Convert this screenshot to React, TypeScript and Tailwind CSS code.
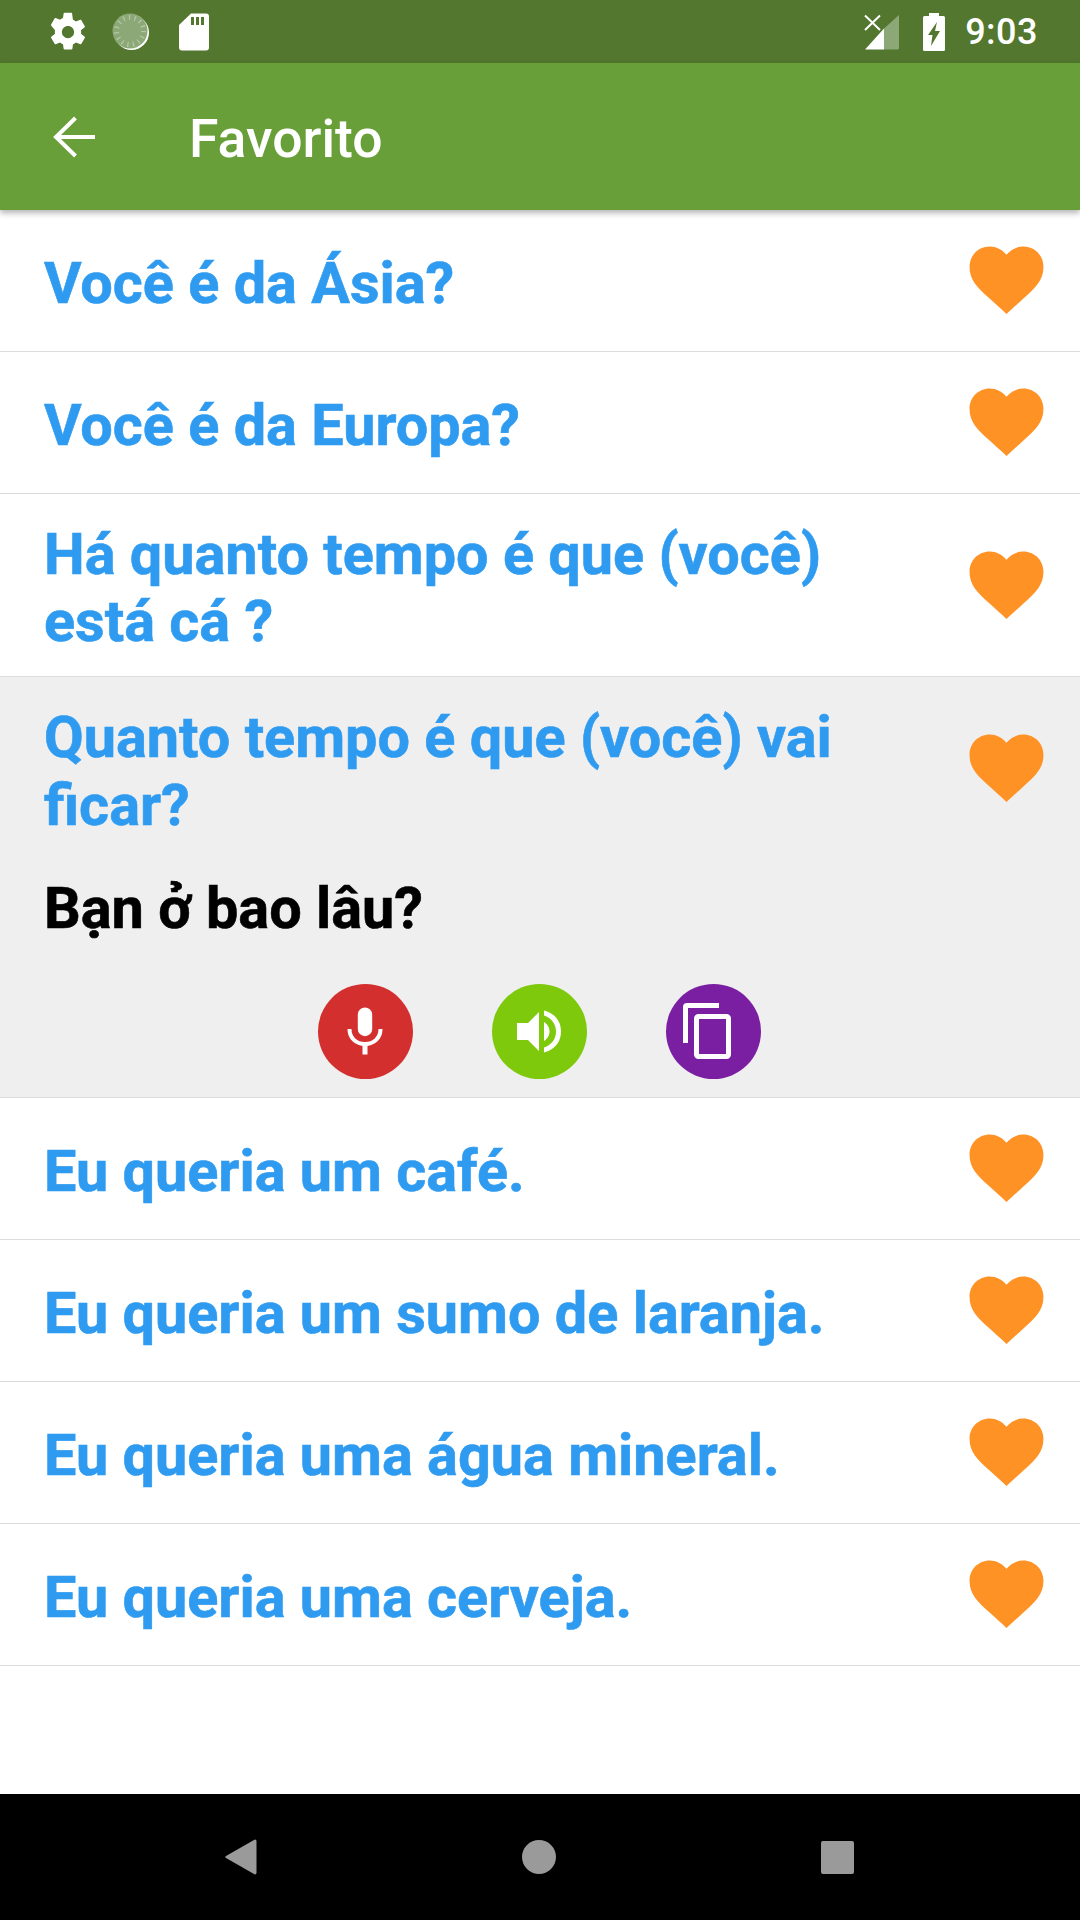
import React from "react";

const Heart = ({ className = "" }: { className?: string }) => (
  <svg width="75" height="69" viewBox="0 0 76 70" className={"shrink-0 " + className}>
    <path d="M38 69 C33 64 27 59 20 52.500 C9 42.500 0.500 35 0.500 21 C0.500 9.500 9.500 0.500 21 0.500 C27.500 0.500 33.500 3.500 38 9 C42.500 3.500 48.500 0.500 55 0.500 C66.500 0.500 75.500 9.500 75.500 21 C75.500 35 67 42.500 56 52.500 C49 59 43 64 38 69 Z" fill="#ff9224" />
  </svg>
);

const Row = ({ text }: { text: React.ReactNode }) => (
  <div className="flex items-center justify-between h-[142px] pl-[44px] pr-[36px] border-b border-[#dcdcdc]">
    <div className="text-[57.6px] leading-[67.5px] font-bold text-[#2f9bf0] [-webkit-text-stroke:0.6px_currentColor] mt-[6px]">{text}</div>
    <Heart />
  </div>
);

export default function App() {
  return (
    <div className="w-[1080px] h-[1920px] flex flex-col bg-white overflow-hidden font-['Roboto',sans-serif]">
      {/* Status bar */}
      <div className="h-[63px] bg-[#53772e] flex items-center pl-[47px] pr-[42px] shrink-0">
        <svg width="42" height="42" viewBox="0 0 24 24" fill="#fff">
          <path d="M19.4 13c.04-.32.1-.65.1-1s-.06-.68-.1-1l2.100-1.650c.2-.15.25-.42.12-.64l-2-3.460c-.12-.22-.39-.3-.61-.22l-2.490 1c-.52-.4-1.080-.73-1.690-.98l-.38-2.650C14.460 1.180 14.250 1 14 1h-4c-.25 0-.46.18-.49.42l-.38 2.650c-.61.25-1.170.59-1.690.98l-2.490-1c-.23-.09-.49 0-.61.22l-2 3.460c-.13.22-.07.49.12.64L4.570 11c-.04.32-.07.66-.07 1s.03.68.07 1l-2.110 1.650c-.19.15-.24.42-.12.64l2 3.460c.12.22.39.3.61.22l2.490-1c.52.4 1.080.73 1.690.98l.38 2.650c.03.24.24.42.49.42h4c.25 0 .46-.18.49-.42l.38-2.650c.61-.25 1.170-.59 1.690-.98l2.490 1c.23.09.49 0 .61-.22l2-3.460c.12-.22.07-.49-.12-.64L19.400 13zM12 15.500c-1.930 0-3.500-1.570-3.500-3.500s1.570-3.500 3.500-3.500 3.500 1.570 3.500 3.500-1.570 3.500-3.500 3.500z" />
        </svg>
        <svg width="38" height="38" viewBox="0 0 38 38" className="ml-[23px]">
          <circle cx="19.500" cy="19.500" r="17.500" fill="#fff" />
          <circle cx="18" cy="18" r="17.500" fill="#8ca876" />
          <circle cx="18" cy="18" r="13.500" fill="none" stroke="#b8c9a8" strokeWidth="5" strokeDasharray="1.200 4.450" />
        </svg>
        <svg width="30" height="38" viewBox="0 0 30 38" className="ml-[29px]">
          <path fillRule="evenodd" fill="#fff" d="M12 0.500 H27 a3 3 0 0 1 3 3 V34.500 a3 3 0 0 1-3 3 H3 a3 3 0 0 1-3-3 V12 Z M12 4 v8 h3 v-8 Z M17 4 v8 h3 v-8 Z M22 4 v8 h3 v-8 Z" />
        </svg>
        <div className="flex-1" />
        <svg width="36" height="36" viewBox="0 0 36 36" className="mt-[1px]">
          <path d="M35 1 V34 a1.500 1.500 0 0 1-1.500 1.500 H20 V14.500 Z" fill="#8ca876" />
          <path d="M20 14.500 V35.500 H1 Z" fill="#fff" />
          <path d="M1 1.500 L16 16 M16 1.500 L1 16" stroke="#fff" strokeWidth="2" fill="none" />
        </svg>
        <svg width="22" height="38" viewBox="0 0 22 38" className="ml-[23px]">
          <path fill="#fff" fillRule="evenodd" d="M6 0 H16 V3 H20.500 A1.500 1.500 0 0 1 22 4.500 V36.500 A1.500 1.500 0 0 1 20.500 38 H1.500 A1.500 1.500 0 0 1 0 36.500 V4.500 A1.500 1.500 0 0 1 1.500 3 H6 Z M14 9 L5 22 H9.500 L8 33 L17 18 H12 Z" />
        </svg>
        <span className="ml-[20px] text-[36px] leading-[38px] text-white font-medium tracking-[0.5px]">9:03</span>
      </div>

      {/* Toolbar */}
      <div className="relative z-10 h-[147px] bg-[#689f38] flex items-center shrink-0 shadow-[0_3px_6px_rgba(0,0,0,0.3)] pl-[53px]">
        <svg width="42" height="42" viewBox="0 0 42 42" fill="none" stroke="#fff" strokeWidth="4">
          <path d="M42 21 H3 M22.500 2 L3 21 L22.500 40" />
        </svg>
        <span className="ml-[94px] text-[53.500px] leading-[60px] font-medium text-white mt-[4px]">Favorito</span>
      </div>

      {/* List */}
      <div className="flex-1 flex flex-col">
        <Row text="Você é da Ásia?" />
        <Row text="Você é da Europa?" />
        <div className="flex items-center justify-between h-[183px] pl-[44px] pr-[36px] border-b border-[#dcdcdc]">
          <div className="text-[57.6px] leading-[67.5px] font-bold text-[#2f9bf0] [-webkit-text-stroke:0.6px_currentColor] mt-[6px]">Há quanto tempo é que (você)<br />está cá ?</div>
          <Heart />
        </div>
        <div className="h-[421px] bg-[#efefef] border-b border-[#dcdcdc] flex flex-col">
          <div className="flex items-center justify-between pl-[44px] pr-[36px] pt-[27px]">
            <div className="text-[57.6px] leading-[67.5px] font-bold text-[#2f9bf0] [-webkit-text-stroke:0.6px_currentColor]">Quanto tempo é que (você) vai<br />ficar?</div>
            <Heart className="mb-[6px]" />
          </div>
          <div className="pl-[44px] mt-[36px] text-[57.6px] leading-[67.5px] font-bold text-black [-webkit-text-stroke:0.6px_currentColor]">Bạn ở bao lâu?</div>
          <div className="flex justify-center gap-[79px] mt-[41px] pr-[2px]">
            <div className="w-[95px] h-[95px] rounded-full bg-[#d32f2f] flex items-center justify-center">
              <svg width="48" height="48" viewBox="0 0 48 48" fill="#fff">
                <path d="M24 0.500 a7.200 7.200 0 0 1 7.200 7.200 V22 a7.200 7.200 0 0 1-14.400 0 V7.700 A7.200 7.200 0 0 1 24 0.500 Z" />
                <path d="M8.500 22 C8.500 31 15 37 24 37 C33 37 39.500 31 39.500 22" fill="none" stroke="#fff" strokeWidth="4" />
                <rect x="21.500" y="36" width="5" height="11.500" />
              </svg>
            </div>
            <div className="w-[95px] h-[95px] rounded-full bg-[#7ec90c] flex items-center justify-center">
              <svg width="48" height="48" viewBox="0 0 48 48" fill="#fff">
                <path d="M2 16 H13 L24 5 V44 L13 33 H2 Z" />
                <path d="M29 15 C32 17 34.500 20 34.500 24.500 C34.500 29 32 32 29 34 Z" />
                <path d="M29 3.500 C40 6.500 46 14 46 24.500 C46 35 40 42.500 29 45.500 V40.500 C36.500 38 41 32 41 24.500 C41 17 36.500 11 29 8.500 Z" />
              </svg>
            </div>
            <div className="w-[95px] h-[95px] rounded-full bg-[#7b1fa2] flex items-center justify-center">
              <svg width="48" height="56" viewBox="0 0 48 56" fill="none" stroke="#fff" strokeWidth="5" className="mr-[12px]">
                <path d="M2.500 40 V4 a1.500 1.500 0 0 1 1.500-1.500 H36" />
                <rect x="13.500" y="13.500" width="32" height="40" rx="2" />
              </svg>
            </div>
          </div>
        </div>
        <Row text="Eu queria um café." />
        <Row text="Eu queria um sumo de laranja." />
        <Row text="Eu queria uma água mineral." />
        <Row text="Eu queria uma cerveja." />
      </div>

      {/* Nav bar */}
      <div className="h-[126px] bg-black flex items-center shrink-0 pl-[225px]">
        <svg width="32" height="36" viewBox="0 0 32 36" fill="#9a9a9a">
          <path d="M30 0.500 a1.500 1.500 0 0 1 1.500 1.500 V34 a1.500 1.500 0 0 1-2.500 1 L1 19 a1.200 1.200 0 0 1 0-2 L29 1 Z" />
        </svg>
        <div className="w-[34px] h-[34px] rounded-full bg-[#9a9a9a] ml-[265px]" />
        <div className="w-[33px] h-[33px] rounded-[2px] bg-[#9a9a9a] ml-[265px]" />
      </div>
    </div>
  );
}
